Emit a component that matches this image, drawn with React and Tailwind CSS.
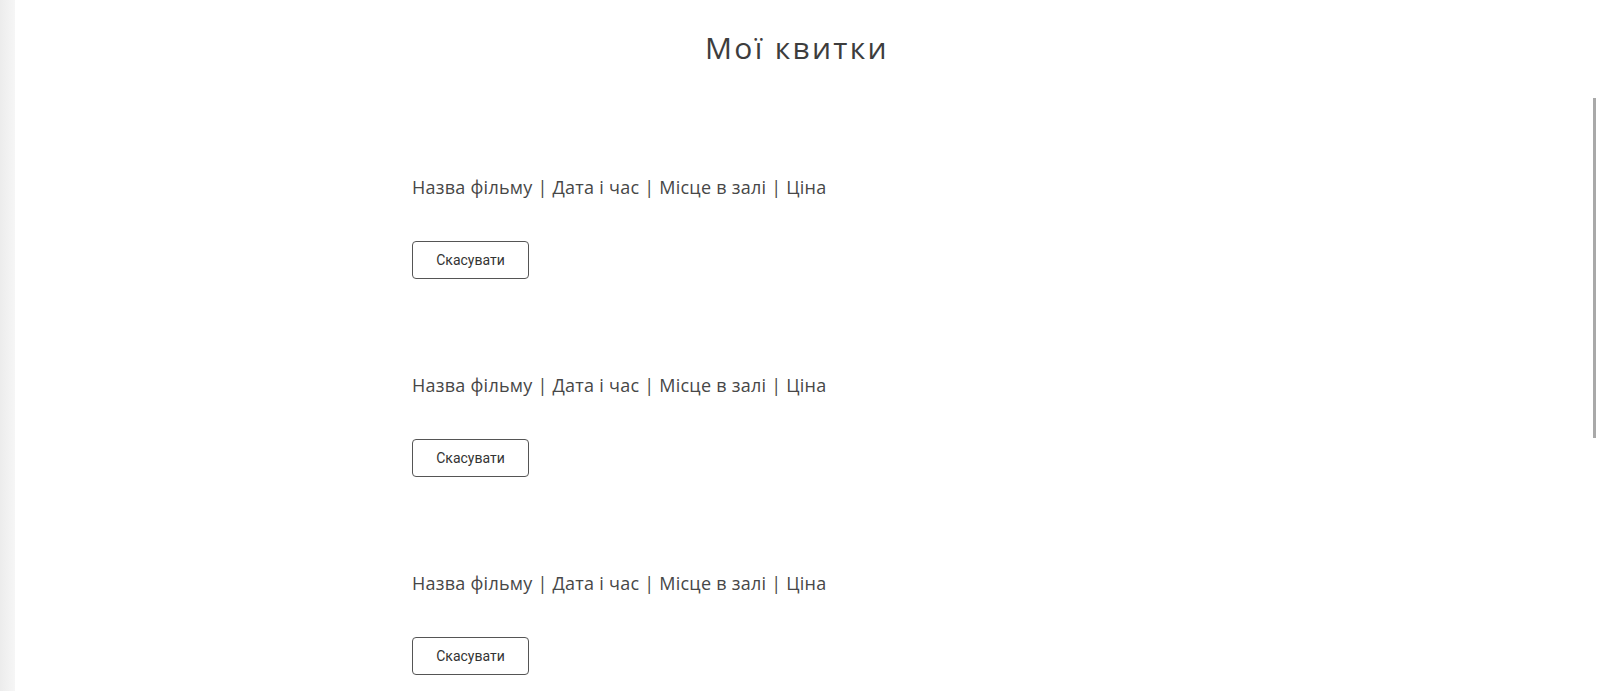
import React from 'react';

const tickets = [1, 2, 3];

export default function App() {
  return (
    <div className="relative h-[691px] overflow-hidden bg-white flex">
      {/* left shadow strip */}
      <div className="w-[15px] shrink-0 bg-linear-to-r from-[#ececec] to-[#f6f6f6]" />

      <div className="flex-1 flex flex-col items-center" style={{ fontFamily: '"Open Sans", sans-serif' }}>
        <h1 className="mt-[30px] text-[30px] leading-[36px] tracking-[2.3px] text-[#3d3d3d] font-normal pr-[18px]">
          Мої квитки
        </h1>

        <div className="w-[773px] mr-[15px] mt-[107px] flex flex-col gap-[92px]">
          {tickets.map(t => (
            <div key={t} className="flex flex-col items-start">
              <p className="text-[18px] leading-[28px] tracking-[0.25px] text-[#474747]">
                Назва фільму | Дата і час | Місце в залі | Ціна
              </p>
              <button
                className="mt-[40px] w-[117px] h-[38px] border border-[#555] rounded-[4px] text-[14px] text-[#333] bg-white"
                style={{ fontFamily: 'Roboto, sans-serif' }}
              >
                Скасувати
              </button>
            </div>
          ))}
        </div>
      </div>

      {/* scrollbar thumb */}
      <div className="absolute right-[1px] top-[98px] w-[3px] h-[340px] bg-[#a9a9a9]" />
    </div>
  );
}
